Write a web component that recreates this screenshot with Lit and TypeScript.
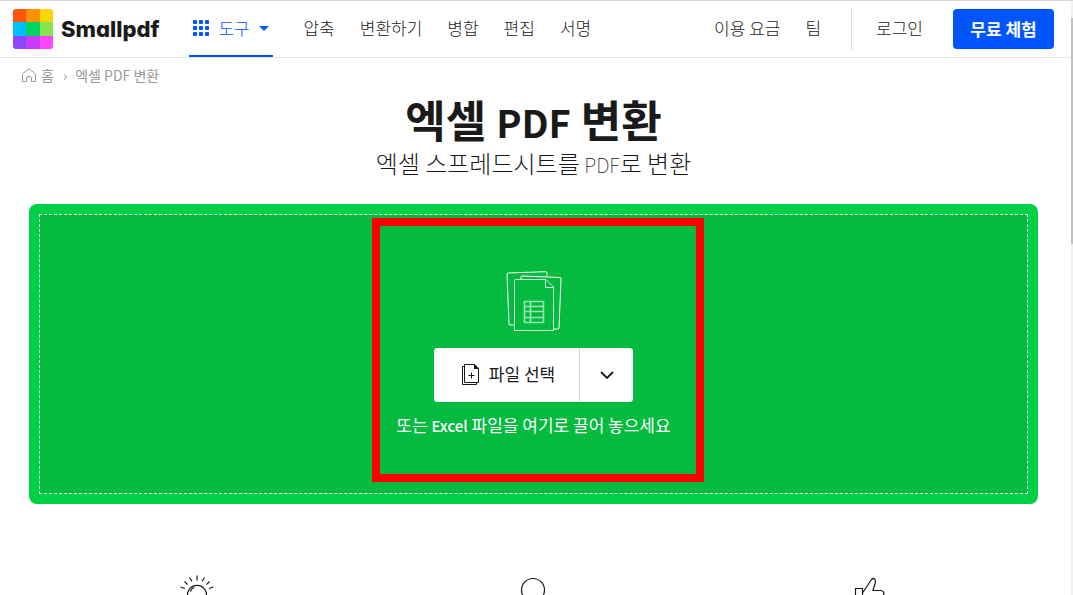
import { LitElement, html, css, svg } from "lit";
import { customElement } from "lit/decorators.js";

const logoColors = [
  "#ff5500", "#ff9100", "#ffd400",
  "#00bfff", "#00d264", "#87e650",
  "#8c46ff", "#c83cfa", "#ff46fa",
];

@customElement("site-header")
class SiteHeader extends LitElement {
  static styles = css`
    :host { display: block; }
    header {
      display: flex;
      align-items: stretch;
      height: 56px;
      padding: 0 17px 0 13px;
      border-top: 1px solid #d9d9d9;
      border-bottom: 1px solid #e5e5e5;
      background: #fff;
    }
    a { color: inherit; text-decoration: none; white-space: nowrap; }
    .logo { display: flex; align-items: center; gap: 8px; }
    .logo svg { display: block; }
    .word {
      font: 800 22px/40px Inter, sans-serif;
      font-feature-settings: "cv11";
      color: #1a1a1a;
    }
    nav { display: flex; align-items: center; gap: 25px; font-size: 17px; font-weight: 300; line-height: 24px; }
    nav > a:not(.tools) { padding-bottom: 2px; }
    .main { margin-left: 30px; gap: 25px; }
    .tools {
      display: flex;
      align-items: center;
      gap: 9px;
      box-sizing: border-box;
      height: 56px;
      width: 84px;
      padding: 0 3px 0 4px;
      margin-right: 5px;
      border-bottom: 2px solid #0055ff;
      color: #0055ff;
    }
    .side { margin-left: auto; }
    .account { display: flex; align-items: center; border-left: 1px solid #d9d9d9; height: 42px; padding-left: 24px; margin-left: 5px; gap: 30px; }
    .login { padding-bottom: 2px; }
    .trial {
      min-width: 101px;
      text-align: center;
      line-height: 40px;
      border-radius: 4px;
      background: #0055ff;
      color: #fff;
      font-weight: 700;
    }
  `;
  render() {
    return html`
      <header>
        <a class="logo" href="#">
          <svg width="40" height="40" viewBox="0 0 40 40">
            <clipPath id="r"><rect width="40" height="40" rx="3" /></clipPath>
            <g clip-path="url(#r)" shape-rendering="crispEdges">
              ${logoColors.map((c, i) => svg`<rect x=${[0, 13, 27][i % 3]} y=${[0, 13, 27][Math.floor(i / 3)]} width="14" height="14" fill=${c} />`)}
            </g>
          </svg>
          <span class="word">Smallpdf</span>
        </a>
        <nav class="main">
          <a class="tools" href="#">
            <svg width="16" height="16" viewBox="0 0 16 16" fill="currentColor">
              ${[0, 6, 12].map((y) => [0, 6, 12].map((x) => svg`<rect x=${x} y=${y} width="4" height="4" rx="1" />`))}
            </svg>
            <span>도구</span>
            <svg width="10" height="5" viewBox="0 0 10 5"><path d="M0 0H10L5 5Z" fill="currentColor" /></svg>
          </a>
          ${["압축", "변환하기", "병합", "편집", "서명"].map((t) => html`<a href="#">${t}</a>`)}
        </nav>
        <nav class="side">
          <a href="#">이용 요금</a>
          <a href="#">팀</a>
          <div class="account">
            <a class="login" href="#">로그인</a>
            <a class="trial" href="#">무료 체험</a>
          </div>
        </nav>
      </header>
    `;
  }
}

@customElement("drop-zone")
class DropZone extends LitElement {
  static styles = css`
    :host { display: block; }
    .outer { position: relative; padding: 10px; border-radius: 8px; background: #00d046; }
    .inner {
      display: flex;
      flex-direction: column;
      align-items: center;
      box-sizing: border-box;
      height: 280px;
      padding-top: 56px;
      border: 1px dashed #fff;
      background: #04bb40;
      background-clip: padding-box;
    }
    .pages { display: block; }
    .actions { display: flex; margin-top: 16px; border-radius: 4px; background: #fff; overflow: hidden; }
    button {
      display: flex;
      align-items: center;
      justify-content: center;
      height: 54px;
      padding: 0;
      border: 0;
      background: #fff;
      color: #1a1a1a;
      font: inherit;
      font-size: 17px;
      font-weight: 400;
      line-height: 24px;
      cursor: pointer;
    }
    .choose { width: 145px; padding-left: 4px; gap: 9px; }
    .choose span { padding-bottom: 2px; }
    .more { width: 54px; border-left: 1px solid #d4d4d4; }
    p { margin: 10px 0 0; font-size: 17px; line-height: 26px; font-weight: 400; color: #fff; }
    .latin { font-size: 15px; line-height: 1; font-weight: 500; }
    .highlight {
      position: absolute;
      box-sizing: border-box;
      top: 14px;
      left: calc(50% + 4px);
      width: 332px;
      height: 264px;
      transform: translateX(-50%);
      border: 8px solid #ff0000;
      pointer-events: none;
    }
  `;
  render() {
    return html`
      <section class="outer">
        <div class="inner">
          <svg class="pages" width="56" height="61" viewBox="0 0 56 61" fill="none" stroke="#fff" stroke-linejoin="round">
            <path d="M8 54H4Q3 54 3 53L1 4Q1 2 2 2L39 .7Q41 .7 41 2V5" />
            <path d="M15 8V6Q15 5 16 5L54 6.5Q55 6.5 55 8L53 57Q53 58 52 58H48" />
            <path d="M8.500 59.500V9.500Q8.500 8.500 9.500 8.500H40L47.500 16V59.500H8.500ZM39.500 8.500V16.500H47.500" stroke-opacity=".8" />
            <path d="M18.500 30.500H37.500V51.500H18.500ZM18 35.500H38M18 40.500H38M18 46.500H38M24.500 30V52" stroke-opacity=".6" stroke-width="1.600" />
          </svg>
          <div class="actions">
            <button class="choose">
              <svg width="18" height="22" viewBox="0 0 18 22" fill="none" stroke="#1a1a1a">
                <path d="M2.500 .5H12.500L16.500 4.500V18.500H2.500ZM2.500 2.500H.5V20.500H14.500V18.500M6.500 11.500H12.500M9.500 8.500V14.500" />
                <path d="M12 0L17 5H12Z" fill="#1a1a1a" stroke="none" />
              </svg>
              <span>파일 선택</span>
            </button>
            <button class="more" aria-label="더 보기">
              <svg width="14" height="9" viewBox="0 0 14 9" fill="none" stroke="#1a1a1a" stroke-width="1.800"><path d="M1 1L7 7L13 1" /></svg>
            </button>
          </div>
          <p>또는 <span class="latin">Excel</span> 파일을 여기로 끌어 놓으세요</p>
        </div>
        <div class="highlight"></div>
      </section>
    `;
  }
}

@customElement("app-root")
class AppRoot extends LitElement {
  static styles = css`
    :host {
      display: grid;
      grid-template-columns: 1fr 2px;
      height: 100vh;
      overflow: hidden;
      background: #fff;
      color: #1a1a1a;
      font-family: "Noto Sans CJK KR", sans-serif;
    }
    .page { min-width: 0; }
    .crumbs { display: flex; align-items: center; margin: 7px 0 0 22px; font-size: 14px; line-height: 20px; color: #999; }
    .crumbs a { display: flex; align-items: center; gap: 5px; color: inherit; text-decoration: none; }
    .sep { margin: 0 8px 0 9px; }
    main { padding: 0 33px 0 29px; }
    h1 { margin: 7px 0 0; text-align: center; font-size: 44px; line-height: 55px; font-weight: 700; }
    h1 .latin { font-size: 38px; line-height: 1; }
    h2 { margin: 0 0 25px; text-align: center; font-size: 24px; line-height: 32px; font-weight: 300; }
    h2 .latin { font-size: 20px; line-height: 1; font-weight: 100; }
    .features { display: grid; grid-template-columns: repeat(3, 1fr); justify-items: center; margin-top: 70px; }
    .features svg { display: block; fill: none; stroke: #1a1a1a; stroke-width: 1.200; }
    .rail { background: #f0f0f0; padding-top: 17px; border-top: 1px solid #d9d9d9; }
    .thumb { height: 226px; background: #c1c1c1; }
  `;
  render() {
    return html`
      <div class="page">
        <site-header></site-header>
        <nav class="crumbs">
          <a href="#">
            <svg width="14" height="15" viewBox="0 0 14 15" fill="none" stroke="#999"><path d="M.5 5.800L7 .8L13.500 5.800V13.500H9.500V10Q9.500 8.500 7 8.500Q4.500 8.500 4.500 10V13.500H.5Z" /></svg>
            <span>홈</span>
          </a>
          <span class="sep">›</span>
          <span>엑셀 PDF 변환</span>
        </nav>
        <main>
          <h1>엑셀 <span class="latin">PDF</span> 변환</h1>
          <h2>엑셀 스프레드시트를<span class="latin"> PDF</span>로 변환</h2>
          <drop-zone></drop-zone>
          <section class="features">
            <svg width="34" height="36" viewBox="0 0 34 36">
              <path d="M8 24A9.500 9.500 0 1 1 26 24M10.500 17.500Q11.500 14 14.500 13.500M17 1.500V6.500M9.500 3.500L12 7.500M24.500 3.500L22 7.500M4.500 7.500L7.500 10.500M29.500 7.500L26.500 10.500M.5 13L5 14.500M33.500 13L29 14.500" />
            </svg>
            <svg width="30" height="36" viewBox="0 0 30 36"><circle cx="15" cy="16" r="11.500" /></svg>
            <svg width="34" height="36" viewBox="0 0 34 36">
              <path d="M2.500 14.500H9.500V30H2.500ZM9.500 19L18.500 5.500Q20 3.800 21.500 5Q23 6.500 22 9.500L20 16.500H28Q31 17 31 19.500Q31 21 29.500 21.500" />
            </svg>
          </section>
        </main>
      </div>
      <div class="rail"><div class="thumb"></div></div>
    `;
  }
}
